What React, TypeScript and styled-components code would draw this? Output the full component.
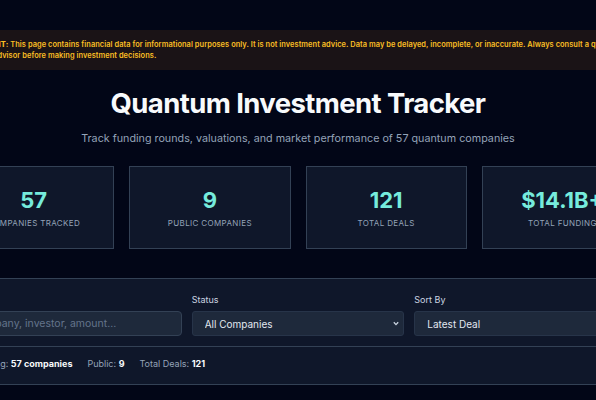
import React from "react";
import styled, { createGlobalStyle } from "styled-components";

const Global = createGlobalStyle`
  html, body { margin: 0; padding: 0; background: #020617; overflow: hidden; }
  body { font-family: Inter, "Noto Sans", sans-serif; color: #e2e8f0; }
  * { box-sizing: border-box; }
`;

const Page = styled.div`
  min-height: 100vh;
  padding-top: 30px;
  background: #020617;
`;

const Banner = styled.div`
  display: flex;
  justify-content: center;
  background: #1a1316;
  padding: 10px 0 9px;
`;

const BannerText = styled.p`
  flex-shrink: 0;
  width: 676px;
  margin: 0;
  font-size: 7.45px;
  line-height: 10.5px;
  font-weight: 600;
  letter-spacing: 0.05px;
  color: #fbbf24;
  strong { font-weight: 800; }
`;

const Main = styled.main`
  display: flex;
  justify-content: center;
`;

const Container = styled.div`
  flex-shrink: 0;
  width: 690px;
`;

const Header = styled.header`
  text-align: center;
  padding: 16px 0 20px;
`;

const Title = styled.h1`
  margin: 0;
  font-size: 27.5px;
  line-height: 34px;
  font-weight: 700;
  letter-spacing: -0.6px;
  color: #f8fafc;
`;

const Subtitle = styled.p`
  margin: 12px 0 0;
  font-size: 10.75px;
  line-height: 14px;
  color: #94a3b8;
`;

const StatsGrid = styled.section`
  display: grid;
  grid-template-columns: repeat(4, 1fr);
  gap: 15px;
`;

const StatCard = styled.div`
  height: 83px;
  background: #0f172a;
  border: 1px solid #334155;
  display: flex;
  flex-direction: column;
  align-items: center;
  justify-content: center;
  gap: 5px;
`;

const StatValue = styled.div`
  font-size: 22px;
  line-height: 26px;
  font-weight: 700;
  color: #76ebdc;
`;

const StatLabel = styled.div`
  font-size: 8px;
  line-height: 11px;
  letter-spacing: 0.35px;
  text-transform: uppercase;
  color: #94a3b8;
`;

const Panel = styled.section`
  margin-top: 29px;
  background: #0f172a;
  border: 1px solid #334155;
  border-radius: 6px;
`;

const Filters = styled.div`
  display: grid;
  grid-template-columns: repeat(3, 1fr);
  gap: 10px;
  padding: 14px 15px 10px;
`;

const Field = styled.label`
  display: flex;
  flex-direction: column;
  gap: 4px;
`;

const FieldLabel = styled.span`
  font-size: 9px;
  line-height: 14px;
  color: #cbd5e1;
`;

const Input = styled.input`
  height: 25px;
  background: #1e293b;
  border: 1px solid #334155;
  border-radius: 4px;
  padding: 0 10px 0 2px;
  font-family: inherit;
  font-size: 10.5px;
  color: #e2e8f0;
  outline: none;
  &::placeholder { color: #64748b; }
`;

const SelectWrap = styled.div`
  position: relative;
`;

const Select = styled.select`
  width: 100%;
  height: 25px;
  appearance: none;
  background: #1e293b;
  border: 1px solid #273449;
  border-radius: 3px;
  padding: 0 12px;
  font-family: inherit;
  font-size: 10px;
  color: #e2e8f0;
  outline: none;
`;

const Chevron = styled.svg`
  position: absolute;
  right: 5px;
  top: 10px;
  width: 6px;
  height: 5px;
  pointer-events: none;
`;

const Summary = styled.div`
  display: flex;
  gap: 15px;
  border-top: 1px solid #334155;
  padding: 10px 15px 13px;
  font-size: 9px;
  line-height: 14px;
  color: #94a3b8;
  b { color: #f8fafc; font-weight: 700; }
`;

const stats = [
  { value: "57", label: "Companies Tracked" },
  { value: "9", label: "Public Companies" },
  { value: "121", label: "Total Deals" },
  { value: "$14.1B+", label: "Total Funding" },
];

export default function App() {
  return (
    <>
      <Global />
      <Page>
        <Banner>
          <BannerText>
            <strong>IMPORTANT:</strong> This page contains financial data for informational purposes only. It is not
            investment advice. Data may be delayed, incomplete, or inaccurate. Always consult a qualified financial
            advisor before making investment decisions.
          </BannerText>
        </Banner>
        <Main>
          <Container>
            <Header>
              <Title>Quantum Investment Tracker</Title>
              <Subtitle>Track funding rounds, valuations, and market performance of 57 quantum companies</Subtitle>
            </Header>
            <StatsGrid>
              {stats.map((s) => (
                <StatCard key={s.label}>
                  <StatValue>{s.value}</StatValue>
                  <StatLabel>{s.label}</StatLabel>
                </StatCard>
              ))}
            </StatsGrid>
            <Panel>
              <Filters>
                <Field>
                  <FieldLabel>Search</FieldLabel>
                  <Input placeholder="Company, investor, amount..." />
                </Field>
                <Field>
                  <FieldLabel>Status</FieldLabel>
                  <SelectWrap>
                    <Select defaultValue="all">
                      <option value="all">All Companies</option>
                      <option value="public">Public</option>
                      <option value="private">Private</option>
                    </Select>
                    <Chevron viewBox="0 0 6 5">
                      <path d="M0.8 1.2 L3 3.6 L5.2 1.2" fill="none" stroke="#cbd5e1" strokeWidth="1.3" />
                    </Chevron>
                  </SelectWrap>
                </Field>
                <Field>
                  <FieldLabel>Sort By</FieldLabel>
                  <SelectWrap>
                    <Select defaultValue="latest">
                      <option value="latest">Latest Deal</option>
                      <option value="funding">Total Funding</option>
                      <option value="name">Name</option>
                    </Select>
                    <Chevron viewBox="0 0 6 5">
                      <path d="M0.8 1.2 L3 3.6 L5.2 1.2" fill="none" stroke="#cbd5e1" strokeWidth="1.3" />
                    </Chevron>
                  </SelectWrap>
                </Field>
              </Filters>
              <Summary>
                <span>
                  Showing: <b>57 companies</b>
                </span>
                <span>
                  Public: <b>9</b>
                </span>
                <span>
                  Total Deals: <b>121</b>
                </span>
              </Summary>
            </Panel>
          </Container>
        </Main>
      </Page>
    </>
  );
}
